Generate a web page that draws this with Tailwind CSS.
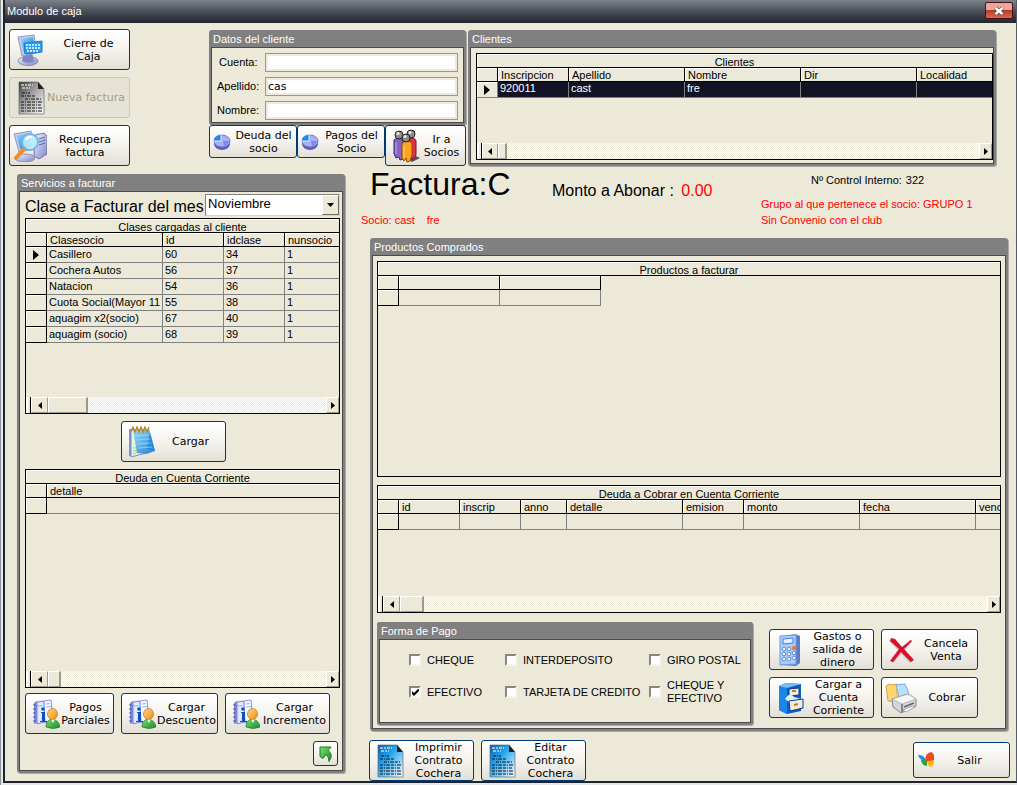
<!DOCTYPE html>
<html lang="es">
  <head>
    <meta charset="UTF-8" />
    <meta name="viewport" content="width=device-width, initial-scale=1.0" />
    <title>Modulo de caja</title>
    <script src="https://cdn.jsdelivr.net/npm/@tailwindcss/browser@4"></script>
  </head>
  <body class="min-h-screen bg-[#e4e8e8] border-l border-[#8c9496] pl-[2px] pb-[1px] text-[11px] leading-[13px] text-black font-['Liberation_Sans',Arial,sans-serif]">

    <!-- iconos -->
    <svg class="absolute size-0" aria-hidden="true">
      <defs>
        <linearGradient id="gBlue" x1="0" y1="0" x2="1" y2="1"><stop offset="0" stop-color="#8fd6fb" /><stop offset="1" stop-color="#1677d2" /></linearGradient>
        <linearGradient id="gLilac" x1="0" y1="0" x2="1" y2="1"><stop offset="0" stop-color="#f4f5ff" /><stop offset="1" stop-color="#7c82c4" /></linearGradient>
        <linearGradient id="gOrange" x1="0" y1="0" x2="1" y2="1"><stop offset="0" stop-color="#ffd98a" /><stop offset="1" stop-color="#ec8a10" /></linearGradient>
        <linearGradient id="gGreen" x1="0" y1="0" x2="1" y2="1"><stop offset="0" stop-color="#7ee070" /><stop offset="1" stop-color="#1b8a2a" /></linearGradient>
        <linearGradient id="gDoc" x1="0" y1="0" x2="1" y2="1"><stop offset="0" stop-color="#0a63b4" /><stop offset=".4" stop-color="#27a4ee" /><stop offset="1" stop-color="#fff" /></linearGradient>
        <linearGradient id="gGrey" x1="0" y1="0" x2="1" y2="1"><stop offset="0" stop-color="#3c3c3c" /><stop offset=".4" stop-color="#9a9a9a" /><stop offset="1" stop-color="#fff" /></linearGradient>
      </defs>
      <symbol id="monitor" viewBox="0 0 28 32">
        <ellipse cx="12" cy="27" rx="10" ry="4.500" fill="url(#gLilac)" stroke="#8b8fb5" />
        <path d="M8 19h8l2 8q-6 4-12 0z" fill="#7f86c4" />
        <path d="M2 3L18 1l3 18-15 3z" fill="#c3cbe8" stroke="#8f9cc4" />
        <path d="M5 5l12-2 2 14-11 2z" fill="url(#gBlue)" />
        <path d="M8 9l18-2v11l-17 2z" fill="#2a9cf0" stroke="#1b7fd0" />
        <path d="M10 11h14M10 14h14M11 17h12" stroke="#fff" stroke-width="1.5" stroke-dasharray="2 1" />
      </symbol>
      <symbol id="document" viewBox="0 0 28 34">
        <path d="M2 1h19l6 7v25H2z" stroke="#555" stroke-width=".6" />
        <path d="M21 1l6 7h-6z" fill="#222" />
        <path d="M4 4h12M5 7h8" stroke="#fff" stroke-opacity=".7" stroke-width="1.6" stroke-dasharray="3 1 2 1" />
        <path d="M5 12h8M4 15h14M8 18h17M4 21h21M4 24h20M4 27h21M4 30h21" stroke="#111" stroke-opacity=".65" stroke-width="1.6" stroke-dasharray="3 1 1 1 4 1" />
      </symbol>
      <symbol id="search-pc" viewBox="0 0 34 32">
        <path d="M22 5l9-2 3 3v18l-8 5-5-3z" fill="url(#gLilac)" stroke="#7379ae" />
        <path d="M26 9l6-2M26 12l6-2M26 15l6-2" stroke="#5c64a8" />
        <ellipse cx="12" cy="28" rx="10" ry="4" fill="url(#gLilac)" stroke="#8b8fb5" />
        <path d="M1 4L18 1l3 18-15 3z" fill="#c3cbe8" stroke="#8f9cc4" />
        <path d="M4 6l12-3 2 14-11 2z" fill="url(#gBlue)" />
        <path d="M11 19l-8 9" stroke="#f08a24" stroke-width="4" stroke-linecap="round" />
        <circle cx="17" cy="12" r="8" fill="#bff0ff" fill-opacity=".9" stroke="#78b4e8" stroke-width="2" />
        <path d="M13 10q2-4 6-3" stroke="#fff" stroke-width="2" fill="none" />
      </symbol>
      <symbol id="pie" viewBox="0 0 18 18">
        <ellipse cx="9" cy="11" rx="8" ry="6" fill="#5a60b8" />
        <ellipse cx="9" cy="8" rx="8" ry="6" fill="#a9b0f6" stroke="#7379d2" />
        <path d="M8 8H0q1-6 8-7z" fill="#2487e8" stroke="#fff" stroke-width=".8" />
        <path d="M10 8h6q-1 4-5 5z" fill="#8389e6" />
      </symbol>
      <symbol id="people" viewBox="0 0 28 34">
        <path d="M16 30l8-3 4 2-8 4z" fill="#555" />
        <path d="M2 11q5-4 9 0v19l-3 1-1-3-3 1-2-4z" fill="#8462c8" stroke="#3a2470" />
        <path d="M17 10q6-2 7 2v14l-3 4-4-1z" fill="#e4324c" stroke="#7c1020" />
        <path d="M10 14q6-4 10 0v12l-2 6-3 1-1-4-2 3-2-3z" fill="#fba41c" stroke="#8a4a00" />
        <path d="M4 13v12M12 17v12" stroke="#fff" stroke-opacity=".5" />
        <g fill="#8d8d8d" stroke="#222"><circle cx="7" cy="6" r="4" /><circle cx="19" cy="5" r="4" /><circle cx="14" cy="9" r="4" /></g>
        <g fill="#eee"><circle cx="6" cy="4.500" r="1.500" /><circle cx="18" cy="3.500" r="1.500" /><circle cx="13" cy="7.500" r="1.500" /></g>
      </symbol>
      <symbol id="notepad" viewBox="0 0 28 32">
        <path d="M1 3h5v27H1z" fill="#8d8bd8" />
        <path d="M3 4h18l1 22-19 5z" fill="#dff8d8" stroke="#7a8ad0" />
        <path d="M5 22l13-1M5 25l14-2M5 28l13-4" stroke="#8fd690" />
        <path d="M5 4h16l6 21-9 3-9-1z" fill="url(#gBlue)" fill-opacity=".9" />
        <path d="M22 6l5 19-8-2z" fill="#2c8ad8" />
        <path d="M7 10l14-1M8 14l14-1M9 18l14-1M10 22l14-1" stroke="#9de0fa" stroke-opacity=".7" />
        <path d="M3 6l2-5 2 5 2-5 2 5 2-5 2 5 2-5 2 5 2-5" stroke="#b88a1c" stroke-width="1.400" fill="none" />
      </symbol>
      <symbol id="info-user" viewBox="0 0 28 30">
        <path d="M2 4l3-2v22l-3 1z" fill="#7f86d4" />
        <path d="M5 3l7-1 1 21-8 2z" fill="#dfe6ff" stroke="#7d88cc" />
        <path d="M12 2l7-1 2 21-8 2z" fill="#f6f9ff" stroke="#8d99d6" />
        <path d="M14 5l4-.5M14 8l5-.5M6 7l4-.5" stroke="#8bb8f0" />
        <path d="M1 6h3M1 10h3M1 14h3M1 18h3M1 22h3" stroke="#555fb0" />
        <circle cx="11" cy="10" r="1.800" fill="#0c50b8" /><path d="M9 13h4v9h2v1H8v-1h2v-8H9z" fill="#0c50b8" />
        <path d="M14 28q0-7 6-8 7 1 8 8-7 3-14 0z" fill="url(#gGreen)" stroke="#1d7a26" stroke-width=".7" />
        <path d="M19 20l2 4 2-4z" fill="#fff" />
        <ellipse cx="20.500" cy="15" rx="5" ry="5.500" fill="url(#gOrange)" stroke="#c77412" stroke-width=".7" />
      </symbol>
      <symbol id="arrow-nw" viewBox="0 0 14 16">
        <path d="M1 1h11L9 4.500q6 4 1 11 0-5-3-7l-3 4-3-2z" fill="url(#gGreen)" stroke="#237a20" />
      </symbol>
      <symbol id="calculator" viewBox="0 0 24 34">
        <path d="M3 4l14-3 5 2v27l-4 3-15-1z" fill="#5b7cc8" />
        <path d="M2 3l16-1v29l-16 1z" fill="#a9cdfb" stroke="#6c98de" />
        <path d="M5 6l10-1v5L5 11z" fill="#e2f1ff" stroke="#3f7fd8" />
        <g fill="#eef6ff" stroke="#4c7fcc" stroke-width=".8"><circle cx="6" cy="16" r="1.800" /><circle cx="11" cy="16" r="1.800" /><circle cx="6" cy="21" r="1.800" /><circle cx="11" cy="21" r="1.800" /><circle cx="16" cy="20" r="1.800" /><circle cx="6" cy="26" r="1.800" /><circle cx="11" cy="26" r="1.800" /><circle cx="16" cy="25" r="1.800" /></g>
        <circle cx="16" cy="15" r="2.200" fill="#f07a3c" />
      </symbol>
      <symbol id="cross" viewBox="0 0 26 26">
        <path d="M2 2l21 22M23 3L4 24" stroke="#888" stroke-width="3" stroke-opacity=".4" transform="translate(-1 1)" />
        <path d="M2 1l4 1 7 8 9-7 1 1-8 8 10 11-3 2-10-10-8 10-3-1 9-12L1 4z" fill="#d8102c" />
      </symbol>
      <symbol id="cabinet" viewBox="0 0 26 32">
        <path d="M1 4l7-3 15 1v27l-14 3-8-4z" fill="#0f5cc4" />
        <path d="M1 4l8 2v26l-8-4z" fill="#1b86e8" />
        <path d="M1 4l7-3 15 1-14 4z" fill="#79bdf8" />
        <path d="M11 7l10-1v7l-10 1z" fill="#f3ecd8" stroke="#0a3c90" /><path d="M14 9h4" stroke="#c87a28" stroke-width="2" />
        <path d="M7 17q5-8 9-2l7 2-12 3z" fill="#dff0ff" />
        <path d="M11 19l14-2v9l-13 3z" fill="#f3ecd8" stroke="#0a3c90" /><path d="M16 23l4-1" stroke="#c87a28" stroke-width="2" />
      </symbol>
      <symbol id="printer" viewBox="0 0 32 32">
        <path d="M1 4l3-2 3 1 5-1v18l-9-1z" fill="#fbd774" stroke="#d8a43c" />
        <path d="M11 3l9-1q3 5 4 12l-10 1z" fill="#b9defc" stroke="#79a9dc" />
        <path d="M7 17l16-5 8 5v7L16 31l-8-6z" fill="#d6d6da" stroke="#85858c" />
        <path d="M7 17l16-5 8 5-14 5z" fill="#f8f8fa" stroke="#a4a4aa" stroke-width=".7" />
        <path d="M17 22v8M19 25l10-4" stroke="#66666e" stroke-width="1.500" />
        <path d="M18 28l9-4 3 1-9 5z" fill="#fff" stroke="#85858c" stroke-width=".7" />
      </symbol>
      <symbol id="butterfly" viewBox="0 0 16 16">
        <path d="M0 3q6-1 8 6-6 0-8-6z" fill="#1e8cf0" /><path d="M3 8q3-1 6 1v5q-5 0-6-6z" fill="#27a83c" />
        <path d="M7 9Q7 1 13 0q4 1 3 8-4 3-9 1z" fill="#f04a18" /><path d="M9 9q4 0 7-1 1 6-4 7-3-2-3-6z" fill="#fcb814" />
      </symbol>
      <symbol id="tri-left" viewBox="0 0 4 7"><path d="M4 0v7L0 3.500z" /></symbol>
      <symbol id="tri-right" viewBox="0 0 4 7"><path d="M0 0v7l4-3.500z" /></symbol>
      <symbol id="row-mark" viewBox="0 0 6 10"><path d="M0 0v10l6-5z" /></symbol>
    </svg>

    <div class="min-h-[782px] bg-[#ece9d8] border-l-2 border-r border-b-2 border-[#1f2430] border-r-[#555c66]">
      <header class="flex items-center justify-between h-[23px] pl-[2px] pr-[3px] bg-gradient-to-b from-[#7d838b] via-[#4a4e58] to-[#22242e] text-white">
        <h1>Modulo de caja</h1>
        <button type="button" aria-label="Cerrar" class="self-start mt-[2px] flex items-center justify-center w-[28px] h-[17px] border border-[#4c1018] rounded-[2px] bg-gradient-to-b from-[#eba698] from-45% via-[#b83c28] via-50% to-[#d86a50]">
          <svg class="w-[12px] h-[10px]" viewBox="0 0 12 10"><path d="M2.500 2l7 6M9.500 2l-7 6" stroke="#5a4a50" stroke-width="4" /><path d="M2.500 2l7 6M9.500 2l-7 6" stroke="#fff" stroke-width="2.400" /></svg>
        </button>
      </header>

      <main class="pl-1 pt-[6px]">
        <div class="flex items-start">
          <div class="w-[200px] shrink-0 flex flex-col gap-[7px]">
            <button type="button" class="flex items-center w-[121px] h-[41px] pl-[6px] border border-[#003c74] rounded-[3px] bg-gradient-to-b from-white via-[#f4f3ee] to-[#e2dfd5] font-['DejaVu_Sans',Verdana,sans-serif]">
              <svg class="w-[28px] h-[32px] shrink-0"><use href="#monitor" /></svg>
              <span class="flex-1 pl-[4px]">Cierre de<br />Caja</span>
            </button>
            <button type="button" disabled class="flex items-center w-[121px] h-[41px] pl-[7px] border border-[#c9c7ba] rounded-[3px] bg-[#e6e3d6] text-[#a1a087] font-['DejaVu_Sans',Verdana,sans-serif]">
              <svg class="w-[28px] h-[34px] shrink-0" fill="url(#gGrey)"><use href="#document" /></svg>
              <span class="flex-1 pr-[2px] whitespace-nowrap">Nueva factura</span>
            </button>
            <button type="button" class="flex items-center w-[121px] h-[41px] pl-[3px] border border-[#003c74] rounded-[3px] bg-gradient-to-b from-white via-[#f4f3ee] to-[#e2dfd5] font-['DejaVu_Sans',Verdana,sans-serif]">
              <svg class="w-[34px] h-[32px] shrink-0"><use href="#search-pc" /></svg>
              <span class="flex-1 pr-[6px]">Recupera<br />factura</span>
            </button>
          </div>

          <div class="w-[257px] shrink-0 pt-px">
            <section class="border-2 border-[#808080] rounded-[3px] bg-[#808080] shadow-[1px_1px_0_#aaa8a0]">
              <h2 class="h-[15px] pt-px pl-[2px] text-white">Datos del cliente</h2>
              <form class="grid grid-cols-[48px_1fr] gap-y-[5px] items-center pt-[5px] pb-[2px] pl-[5px] pr-[5px] border border-[#4a4a4a] bg-[#ece9d8]">
                <label for="cuenta" class="pl-[2px]">Cuenta:</label>
                <input id="cuenta" type="text" class="w-full h-[19px] px-[3px] border border-[#7f9db9] bg-white shadow-[inset_0_0_0_2px_#f1e8e0]" />
                <label for="apellido">Apellido:</label>
                <input id="apellido" type="text" value="cas" class="w-full h-[19px] px-[2px] border border-[#7f9db9] bg-white shadow-[inset_0_0_0_2px_#f1e8e0] font-['DejaVu_Sans',Verdana,sans-serif]" />
                <label for="nombre">Nombre:</label>
                <input id="nombre" type="text" class="w-full h-[19px] px-[3px] border border-[#7f9db9] bg-white shadow-[inset_0_0_0_2px_#f1e8e0]" />
              </form>
            </section>
            <div class="flex items-start">
              <button type="button" class="flex items-center w-[88px] h-[33px] pl-[3px] border border-[#003c74] rounded-[3px] bg-gradient-to-b from-white via-[#f4f3ee] to-[#e2dfd5] font-['DejaVu_Sans',Verdana,sans-serif]">
                <svg class="size-[18px] shrink-0"><use href="#pie" /></svg>
                <span class="flex-1">Deuda del<br />socio</span>
              </button>
              <button type="button" class="flex items-center w-[88px] h-[33px] pl-[3px] border border-[#003c74] rounded-[3px] bg-gradient-to-b from-white via-[#f4f3ee] to-[#e2dfd5] font-['DejaVu_Sans',Verdana,sans-serif]">
                <svg class="size-[18px] shrink-0"><use href="#pie" /></svg>
                <span class="flex-1">Pagos del<br />Socio</span>
              </button>
              <button type="button" class="flex items-center w-[81px] h-[41px] pl-[6px] border border-[#003c74] rounded-[3px] bg-gradient-to-b from-white via-[#f4f3ee] to-[#e2dfd5] font-['DejaVu_Sans',Verdana,sans-serif]">
                <svg class="w-[28px] h-[34px] shrink-0"><use href="#people" /></svg>
                <span class="flex-1 pr-[2px]">Ir a<br />Socios</span>
              </button>
            </div>
          </div>

          <section class="flex-1 min-w-0 mt-px ml-[2px] mr-[20px] border-2 border-[#808080] rounded-[3px] bg-[#808080] shadow-[1px_1px_0_#aaa8a0]">
            <h2 class="h-[15px] pt-px pl-[2px] text-white">Clientes</h2>
            <div class="pt-[5px] pb-[3px] pl-[5px] border border-[#4a4a4a] bg-[#ece9d8]">
              <div class="flex flex-col h-[107px] border border-black overflow-hidden">
                <table class="w-full table-fixed border-separate border-spacing-0 text-left whitespace-nowrap">
                  <caption class="h-[14px] border-b border-black shadow-[inset_1px_1px_0_white] overflow-hidden leading-[16px]">Clientes</caption>
                  <colgroup><col class="w-[21px]" /><col class="w-[71px]" /><col class="w-[116px]" /><col class="w-[116px]" /><col class="w-[116px]" /><col /></colgroup>
                  <thead>
                    <tr class="h-[14px] *:border-b *:border-r *:last:border-r-0 *:border-black *:p-0 *:pl-[3px] *:pt-[2px] *:font-normal *:leading-[11px] *:shadow-[inset_1px_1px_0_white]">
                      <th></th><th>Inscripcion</th><th>Apellido</th><th>Nombre</th><th>Dir</th><th>Localidad</th>
                    </tr>
                  </thead>
                  <tbody>
                    <tr class="h-[16px] *:border-b *:border-r *:last:border-r-0 *:border-[#808080] *:p-0 *:pl-[2px] *:pb-[2px] *:leading-[13px] bg-[#121426] text-white">
                      <td class="bg-[#ece9d8] text-black shadow-[inset_1px_1px_0_white]"><svg class="w-[6px] h-[10px] mt-[2px] ml-[5px]"><use href="#row-mark" /></svg></td><td>920011</td><td>cast</td><td>fre</td><td></td><td></td>
                    </tr>
                  </tbody>
                </table>
                <div class="flex h-[16px] mt-auto">
                  <span class="w-[5px] border-r border-black border-l-2 border-l-white"></span>
                  <button type="button" aria-label="Izquierda" class="flex items-center justify-center w-[16px] border border-t-white border-l-white border-[#9d9a8c]"><svg class="w-[4px] h-[7px]"><use href="#tri-left" /></svg></button>
                  <span class="w-[9px] border border-r-2 border-t-white border-l-white border-[#9d9a8c]"></span>
                  <span class="flex-1 bg-[repeating-conic-gradient(#fff_0_25%,#ece9d8_0_50%)] bg-[length:2px_2px]"></span>
                  <button type="button" aria-label="Derecha" class="flex items-center justify-center w-[13px] border border-t-white border-l-white border-[#9d9a8c]"><svg class="w-[4px] h-[7px]"><use href="#tri-right" /></svg></button>
                </div>
              </div>
            </div>
          </section>
        </div>

        <div class="flex items-start">
          <section class="w-[328px] shrink-0 mt-2 ml-2 border-2 border-[#808080] rounded-[3px] bg-[#808080] shadow-[1px_1px_0_#aaa8a0]">
            <h2 class="h-[15px] pl-[2px] pt-px text-white">Servicios a facturar</h2>
            <div class="min-h-[580px] pl-[5px] pr-[2px] border border-[#4a4a4a] bg-[#ece9d8]">
              <div class="flex items-center h-[26px]">
                <label for="mes" class="w-[180px] pt-[4px] text-[16px] leading-[20px] whitespace-nowrap">Clase a Facturar del mes</label>
                <div class="relative flex-1">
                  <select id="mes" class="w-full h-[22px] pl-[2px] pb-[2px] appearance-none bg-white border border-t-[#808080] border-l-[#808080] border-[#d8d5c6] text-[13px] leading-[16px]">
                    <option>Octubre</option>
                    <option selected>Noviembre</option>
                    <option>Diciembre</option>
                  </select>
                  <span class="absolute right-[1px] top-[1px] flex items-center justify-center w-[17px] h-[20px] bg-[#ece9d8] border border-t-white border-l-white border-[#6f6c60] pointer-events-none">
                    <svg class="w-[7px] h-[4px]" viewBox="0 0 7 4"><path d="M0 0h7L3.500 4z" /></svg>
                  </span>
                </div>
              </div>

              <div class="flex flex-col h-[196px] border border-black overflow-hidden">
                <table class="w-full table-fixed border-separate border-spacing-0 text-left whitespace-nowrap">
                  <caption class="h-[14px] border-b border-black shadow-[inset_1px_1px_0_white] overflow-hidden leading-[16px]">Clases cargadas al cliente</caption>
                  <colgroup><col class="w-[21px]" /><col class="w-[116px]" /><col class="w-[61px]" /><col class="w-[61px]" /><col /></colgroup>
                  <thead>
                    <tr class="h-[14px] *:border-b *:border-r *:last:border-r-0 *:border-black *:p-0 *:pl-[3px] *:pt-[2px] *:font-normal *:leading-[11px] *:shadow-[inset_1px_1px_0_white]">
                      <th></th><th>Clasesocio</th><th>id</th><th>idclase</th><th>nunsocio</th>
                    </tr>
                  </thead>
                  <tbody class="[&_tr]:h-[16px] [&_td]:p-0 [&_td]:pl-[2px] [&_td]:leading-[15px] [&_td]:overflow-hidden [&_td]:border-b [&_td]:border-r [&_td]:border-[#808080] [&_td:first-child]:border-black [&_td:last-child]:border-r-0 [&_td:first-child]:shadow-[inset_1px_1px_0_white]">
                    <tr><td><svg class="w-[6px] h-[10px] ml-[5px]"><use href="#row-mark" /></svg></td><td>Casillero</td><td>60</td><td>34</td><td>1</td></tr>
                    <tr><td></td><td>Cochera Autos</td><td>56</td><td>37</td><td>1</td></tr>
                    <tr><td></td><td>Natacion</td><td>54</td><td>36</td><td>1</td></tr>
                    <tr><td></td><td>Cuota Social(Mayor 11 a</td><td>55</td><td>38</td><td>1</td></tr>
                    <tr><td></td><td>aquagim x2(socio)</td><td>67</td><td>40</td><td>1</td></tr>
                    <tr><td></td><td>aquagim (socio)</td><td>68</td><td>39</td><td>1</td></tr>
                  </tbody>
                </table>
                <div class="flex h-[16px] mt-auto">
                  <span class="w-[5px] border-r border-black border-l-2 border-l-white"></span>
                  <button type="button" aria-label="Izquierda" class="flex items-center justify-center w-[17px] border border-t-white border-l-white border-[#9d9a8c]"><svg class="w-[4px] h-[7px]"><use href="#tri-left" /></svg></button>
                  <span class="w-[40px] border border-r-2 border-t-white border-l-white border-[#9d9a8c]"></span>
                  <span class="flex-1 bg-[repeating-conic-gradient(#fff_0_25%,#ece9d8_0_50%)] bg-[length:2px_2px]"></span>
                  <button type="button" aria-label="Derecha" class="flex items-center justify-center w-[13px] border border-t-white border-l-white border-[#9d9a8c]"><svg class="w-[4px] h-[7px]"><use href="#tri-right" /></svg></button>
                </div>
              </div>

              <button type="button" class="flex items-center w-[105px] h-[41px] mt-[7px] ml-[96px] pl-[6px] border border-[#003c74] rounded-[3px] bg-gradient-to-b from-white via-[#f4f3ee] to-[#e2dfd5] font-['DejaVu_Sans',Verdana,sans-serif]">
                <svg class="w-[28px] h-[32px] shrink-0"><use href="#notepad" /></svg>
                <span class="flex-1">Cargar</span>
              </button>

              <div class="flex flex-col h-[219px] mt-[7px] border border-black overflow-hidden">
                <table class="w-full table-fixed border-separate border-spacing-0 text-left whitespace-nowrap">
                  <caption class="h-[14px] border-b border-black shadow-[inset_1px_1px_0_white] overflow-hidden leading-[16px]">Deuda en Cuenta Corriente</caption>
                  <colgroup><col class="w-[21px]" /><col /></colgroup>
                  <thead>
                    <tr class="h-[14px] *:border-b *:border-r *:last:border-r-0 *:border-black *:p-0 *:pl-[3px] *:pt-[2px] *:font-normal *:leading-[11px] *:shadow-[inset_1px_1px_0_white]">
                      <th></th><th>detalle</th>
                    </tr>
                  </thead>
                  <tbody>
                    <tr class="h-[16px]"><td class="p-0 border-b border-r border-black shadow-[inset_1px_1px_0_white]"></td><td class="p-0 border-b border-[#808080]"></td></tr>
                  </tbody>
                </table>
                <div class="flex h-[16px] mt-auto">
                  <span class="w-[5px] border-r border-black border-l-2 border-l-white"></span>
                  <button type="button" aria-label="Izquierda" class="flex items-center justify-center w-[17px] border border-t-white border-l-white border-[#9d9a8c]"><svg class="w-[4px] h-[7px]"><use href="#tri-left" /></svg></button>
                  <span class="w-[13px] border border-r-2 border-t-white border-l-white border-[#9d9a8c]"></span>
                  <span class="flex-1 bg-[repeating-conic-gradient(#fff_0_25%,#ece9d8_0_50%)] bg-[length:2px_2px]"></span>
                  <button type="button" aria-label="Derecha" class="flex items-center justify-center w-[13px] border border-t-white border-l-white border-[#9d9a8c]"><svg class="w-[4px] h-[7px]"><use href="#tri-right" /></svg></button>
                </div>
              </div>

              <div class="flex gap-[7px] mt-[5px]">
                <button type="button" class="flex items-center w-[89px] h-[41px] pl-[6px] border border-[#003c74] rounded-[3px] bg-gradient-to-b from-white via-[#f4f3ee] to-[#e2dfd5] font-['DejaVu_Sans',Verdana,sans-serif]">
                  <svg class="w-[28px] h-[30px] shrink-0"><use href="#info-user" /></svg>
                  <span class="flex-1 pr-[2px]">Pagos<br />Parciales</span>
                </button>
                <button type="button" class="flex items-center w-[97px] h-[41px] pl-[6px] border border-[#003c74] rounded-[3px] bg-gradient-to-b from-white via-[#f4f3ee] to-[#e2dfd5] font-['DejaVu_Sans',Verdana,sans-serif]">
                  <svg class="w-[28px] h-[30px] shrink-0"><use href="#info-user" /></svg>
                  <span class="flex-1">Cargar<br />Descuento</span>
                </button>
                <button type="button" class="flex items-center w-[105px] h-[41px] pl-[6px] border border-[#003c74] rounded-[3px] bg-gradient-to-b from-white via-[#f4f3ee] to-[#e2dfd5] font-['DejaVu_Sans',Verdana,sans-serif]">
                  <svg class="w-[28px] h-[30px] shrink-0"><use href="#info-user" /></svg>
                  <span class="flex-1">Cargar<br />Incremento</span>
                </button>
              </div>
              <button type="button" aria-label="Volver" class="flex items-center justify-center size-[25px] mt-[7px] ml-auto mr-[2px] border border-[#003c74] rounded-[3px] bg-gradient-to-b from-white via-[#f4f3ee] to-[#e2dfd5]">
                <svg class="w-[14px] h-[16px]"><use href="#arrow-nw" /></svg>
              </button>
            </div>
          </section>

          <div class="flex-1 min-w-0 ml-4">
            <div class="flex h-[72px] whitespace-nowrap">
              <div class="w-[191px]">
                <p class="pl-[9px] text-[32px] leading-[36px]">Factura:C</p>
                <p class="mt-[10px] leading-[16px] text-[#ff0000]">Socio: cast<span class="ml-3">fre</span></p>
              </div>
              <p class="w-[209px] pt-4 text-[16px] leading-[18px]">Monto a Abonar : <span class="ml-[3px] text-[#ff0000]">0.00</span></p>
              <div class="pt-[6px] leading-[16px]">
                <p class="pl-[50px]">Nº Control Interno:<span class="ml-1">322</span></p>
                <p class="mt-2 text-[#ff0000]">Grupo al que pertenece el socio: GRUPO 1</p>
                <p class="text-[#ff0000]">Sin Convenio con el club</p>
              </div>
            </div>

            <section class="ml-[9px] mr-2 border-2 border-[#808080] rounded-[3px] bg-[#808080] shadow-[1px_1px_0_#aaa8a0]">
              <h2 class="h-[15px] pt-px pl-[2px] text-white">Productos Comprados</h2>
              <div class="pt-[5px] pb-[3px] px-1 border border-[#4a4a4a] bg-[#ece9d8]">
                <div class="h-[216px] border border-black overflow-hidden">
                  <p class="h-[14px] border-b border-black shadow-[inset_1px_1px_0_white] overflow-hidden text-center leading-[16px]" id="productos">Productos a facturar</p>
                  <table aria-labelledby="productos" class="w-[223px] table-fixed border-separate border-spacing-0">
                    <colgroup><col class="w-[21px]" /><col class="w-[101px]" /><col class="w-[101px]" /></colgroup>
                    <thead><tr class="h-[14px] *:border-b *:border-r *:border-black *:p-0 *:shadow-[inset_1px_1px_0_white]"><th></th><th></th><th></th></tr></thead>
                    <tbody><tr class="h-[16px] *:border-b *:border-r *:p-0"><td class="border-black shadow-[inset_1px_1px_0_white]"></td><td class="border-[#808080]"></td><td class="border-[#808080]"></td></tr></tbody>
                  </table>
                </div>

                <div class="flex flex-col h-[128px] mt-2 border border-black overflow-hidden">
                  <table class="w-full table-fixed border-separate border-spacing-0 text-left whitespace-nowrap">
                    <caption class="h-[14px] border-b border-black shadow-[inset_1px_1px_0_white] overflow-hidden leading-[16px]">Deuda a Cobrar en Cuenta Corriente</caption>
                    <colgroup><col class="w-[21px]" /><col class="w-[61px]" /><col class="w-[61px]" /><col class="w-[46px]" /><col class="w-[116px]" /><col class="w-[61px]" /><col class="w-[116px]" /><col class="w-[116px]" /><col /></colgroup>
                    <thead>
                      <tr class="h-[14px] *:border-b *:border-r *:last:border-r-0 *:border-black *:p-0 *:pl-[3px] *:pt-[2px] *:font-normal *:leading-[11px] *:overflow-hidden *:shadow-[inset_1px_1px_0_white]">
                        <th></th><th>id</th><th>inscrip</th><th>anno</th><th>detalle</th><th>emision</th><th>monto</th><th>fecha</th><th>venc</th>
                      </tr>
                    </thead>
                    <tbody>
                      <tr class="h-[16px] [&_td]:p-0 [&_td]:border-b [&_td]:border-r [&_td]:border-[#808080] [&_td:first-child]:border-black [&_td:last-child]:border-r-0"><td class="shadow-[inset_1px_1px_0_white]"></td><td></td><td></td><td></td><td></td><td></td><td></td><td></td><td></td></tr>
                    </tbody>
                  </table>
                  <div class="flex h-[16px] mt-auto">
                    <span class="w-[5px] border-r border-black border-l-2 border-l-white"></span>
                    <button type="button" aria-label="Izquierda" class="flex items-center justify-center w-[17px] border border-t-white border-l-white border-[#9d9a8c]"><svg class="w-[4px] h-[7px]"><use href="#tri-left" /></svg></button>
                    <span class="w-[24px] border border-r-2 border-t-white border-l-white border-[#9d9a8c]"></span>
                    <span class="flex-1 bg-[repeating-conic-gradient(#fff_0_25%,#ece9d8_0_50%)] bg-[length:2px_2px]"></span>
                    <button type="button" aria-label="Derecha" class="flex items-center justify-center w-[13px] border border-t-white border-l-white border-[#9d9a8c]"><svg class="w-[4px] h-[7px]"><use href="#tri-right" /></svg></button>
                  </div>
                </div>

                <div class="flex items-start mt-[9px]">
                  <fieldset class="flex-1 min-w-0 border-2 border-[#808080] rounded-[3px] bg-[#808080] shadow-[1px_1px_0_#aaa8a0]">
                    <legend class="float-left w-full h-[15px] pt-px pl-[2px] text-white">Forma de Pago</legend>
                    <div class="clear-both grid grid-cols-[96px_144px_1fr] grid-rows-[32px_32px] h-[84px] pt-[4px] pl-[29px] border border-[#4a4a4a] bg-[#ece9d8] *:relative *:flex *:items-center *:gap-[6px] *:whitespace-nowrap">
                      <label><input type="checkbox" class="size-3 appearance-none bg-white border-2 border-t-[#8a877a] border-l-[#8a877a] border-[#f7f6f0]" />CHEQUE</label>
                      <label><input type="checkbox" class="size-3 appearance-none bg-white border-2 border-t-[#8a877a] border-l-[#8a877a] border-[#f7f6f0]" />INTERDEPOSITO</label>
                      <label><input type="checkbox" class="size-3 appearance-none bg-white border-2 border-t-[#8a877a] border-l-[#8a877a] border-[#f7f6f0]" />GIRO POSTAL</label>
                      <label><input type="checkbox" checked class="peer size-3 appearance-none bg-white border-2 border-t-[#8a877a] border-l-[#8a877a] border-[#f7f6f0]" /><svg class="absolute left-[3px] hidden peer-checked:block size-[7px]" viewBox="0 0 7 7"><path d="M0 2v3l2 2 5-5V-1L2 4z" /></svg>EFECTIVO</label>
                      <label><input type="checkbox" class="size-3 appearance-none bg-white border-2 border-t-[#8a877a] border-l-[#8a877a] border-[#f7f6f0]" />TARJETA DE CREDITO</label>
                      <label><input type="checkbox" class="size-3 appearance-none bg-white border-2 border-t-[#8a877a] border-l-[#8a877a] border-[#f7f6f0]" /><span>CHEQUE Y<br />EFECTIVO</span></label>
                    </div>
                  </fieldset>
                  <div class="grid grid-cols-[105px_97px] gap-[7px] mt-[7px] ml-4 mr-[23px]">
                    <button type="button" class="flex items-center h-[41px] pl-[8px] border border-[#003c74] rounded-[3px] bg-gradient-to-b from-white via-[#f4f3ee] to-[#e2dfd5] font-['DejaVu_Sans',Verdana,sans-serif]">
                      <svg class="w-[24px] h-[34px] shrink-0"><use href="#calculator" /></svg>
                      <span class="flex-1">Gastos o<br />salida de<br />dinero</span>
                    </button>
                    <button type="button" class="flex items-center h-[41px] pl-[7px] border border-[#003c74] rounded-[3px] bg-gradient-to-b from-white via-[#f4f3ee] to-[#e2dfd5] font-['DejaVu_Sans',Verdana,sans-serif]">
                      <svg class="size-[26px] shrink-0"><use href="#cross" /></svg>
                      <span class="flex-1">Cancela<br />Venta</span>
                    </button>
                    <button type="button" class="flex items-center h-[41px] pl-[8px] border border-[#003c74] rounded-[3px] bg-gradient-to-b from-white via-[#f4f3ee] to-[#e2dfd5] font-['DejaVu_Sans',Verdana,sans-serif]">
                      <svg class="w-[26px] h-[32px] shrink-0"><use href="#cabinet" /></svg>
                      <span class="flex-1">Cargar a<br />Cuenta<br />Corriente</span>
                    </button>
                    <button type="button" class="flex items-center h-[41px] pl-[3px] border border-[#003c74] rounded-[3px] bg-gradient-to-b from-white via-[#f4f3ee] to-[#e2dfd5] font-['DejaVu_Sans',Verdana,sans-serif]">
                      <svg class="size-[32px] shrink-0"><use href="#printer" /></svg>
                      <span class="flex-1">Cobrar</span>
                    </button>
                  </div>
                </div>
              </div>
            </section>

            <div class="flex items-start gap-[7px] mt-[9px] ml-2 mr-[6px]">
              <button type="button" class="flex items-center w-[105px] h-[41px] pl-[6px] border border-[#003c74] rounded-[3px] bg-gradient-to-b from-white via-[#f4f3ee] to-[#e2dfd5] font-['DejaVu_Sans',Verdana,sans-serif]">
                <svg class="w-[28px] h-[34px] shrink-0" fill="url(#gDoc)"><use href="#document" /></svg>
                <span class="flex-1">Imprimir<br />Contrato<br />Cochera</span>
              </button>
              <button type="button" class="flex items-center w-[105px] h-[41px] pl-[6px] border border-[#003c74] rounded-[3px] bg-gradient-to-b from-white via-[#f4f3ee] to-[#e2dfd5] font-['DejaVu_Sans',Verdana,sans-serif]">
                <svg class="w-[28px] h-[34px] shrink-0" fill="url(#gDoc)"><use href="#document" /></svg>
                <span class="flex-1">Editar<br />Contrato<br />Cochera</span>
              </button>
              <button type="button" class="flex items-center w-[97px] h-[36px] mt-[2px] ml-auto pl-[4px] border border-[#003c74] rounded-[3px] bg-gradient-to-b from-white via-[#f4f3ee] to-[#e2dfd5] font-['DejaVu_Sans',Verdana,sans-serif]">
                <svg class="size-[16px] shrink-0"><use href="#butterfly" /></svg>
                <span class="flex-1 pr-[4px]">Salir</span>
              </button>
            </div>
          </div>
        </div>
      </main>
    </div>
  </body>
</html>
